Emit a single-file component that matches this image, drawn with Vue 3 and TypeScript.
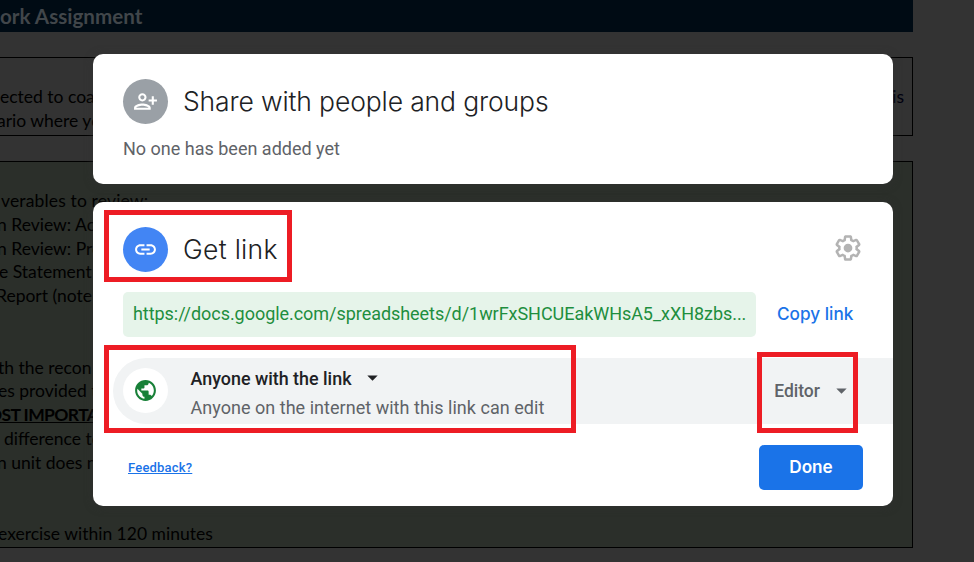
<script setup lang="ts">
interface DocLine {
  text: string
  shift: number
  strong?: boolean
}

const introLines: DocLine[] = [
  { text: 'ected to coach', shift: 0 },
  { text: 'ario where you', shift: -3 },
]

const bodyLines: DocLine[] = [
  { text: 'verables to review:', shift: 1 },
  { text: 'n Review: Accounts', shift: -3 },
  { text: 'n Review: Process', shift: -3 },
  { text: 'e Statement', shift: -1 },
  { text: 'Report (note', shift: -4 },
  { text: '', shift: 0 },
  { text: '', shift: 0 },
  { text: 'th the recon', shift: -2 },
  { text: 'es provided to', shift: -2 },
  { text: 'OST IMPORTANT', shift: -12, strong: true },
  { text: 'difference to', shift: 4 },
  { text: 'n unit does not', shift: -3 },
  { text: '', shift: 0 },
  { text: '', shift: 0 },
  { text: 'exercise within 120 minutes', shift: -2 },
]
</script>

<template>
  <div class="screen">
    <div class="sheet">
      <div class="banner">ork Assignment</div>
      <div class="box intro">
        <p v-for="(line, i) in introLines" :key="i" :style="{ marginLeft: line.shift + 'px' }">{{ line.text }}</p>
        <span class="tail">is</span>
      </div>
      <div class="box body">
        <p
          v-for="(line, i) in bodyLines"
          :key="i"
          :class="{ strong: line.strong }"
          :style="{ marginLeft: line.shift + 'px' }"
        >{{ line.text }}</p>
      </div>
    </div>

    <div class="overlay">
      <section class="card people">
        <header class="head">
          <span class="badge grey">
            <svg viewBox="0 0 24 24"><path d="M13 8c0-2.21-1.79-4-4-4S5 5.79 5 8s1.79 4 4 4 4-1.79 4-4zm-2 0c0 1.1-.9 2-2 2s-2-.9-2-2 .9-2 2-2 2 .9 2 2zM1 18v2h16v-2c0-2.66-5.33-4-8-4s-8 1.34-8 4zm2 0c.2-.71 3.3-2 6-2 2.69 0 5.78 1.28 6 2H3zM20 15v-3h3v-2h-3V7h-2v3h-3v2h3v3h2z" /></svg>
          </span>
          <h2 class="t-share">Share with people and groups</h2>
        </header>
        <p class="empty">No one has been added yet</p>
      </section>

      <section class="card link">
        <header class="head">
          <span class="badge blue">
            <svg viewBox="0 0 24 24"><path d="M3.9 12c0-1.71 1.39-3.1 3.1-3.1h4V7H7c-2.76 0-5 2.24-5 5s2.24 5 5 5h4v-1.900H7c-1.710 0-3.100-1.390-3.100-3.100zM8 13h8v-2H8v2zm9-6h-4v1.900h4c1.710 0 3.100 1.390 3.100 3.100s-1.390 3.100-3.100 3.100h-4V17h4c2.760 0 5-2.240 5-5s-2.240-5-5-5z" /></svg>
          </span>
          <h2 class="t-get">Get link</h2>
          <svg class="gear" viewBox="0 0 24 24"><path d="M13.85 22.25h-3.7c-.74 0-1.36-.54-1.45-1.27l-.27-1.89c-.27-.14-.53-.29-.79-.46l-1.8.72c-.7.26-1.47-.03-1.81-.65L2.2 15.53c-.35-.66-.2-1.44.36-1.88l1.53-1.19c-.01-.15-.02-.3-.02-.46 0-.15.01-.31.02-.46l-1.52-1.19c-.59-.45-.74-1.26-.37-1.88l1.85-3.19c.34-.62 1.11-.9 1.79-.63l1.81.73c.26-.17.52-.32.78-.46l.27-1.91c.09-.7.71-1.25 1.44-1.25h3.7c.74 0 1.36.54 1.45 1.27l.27 1.89c.27.14.53.29.79.46l1.8-.72c.71-.26 1.48.03 1.82.65l1.84 3.18c.36.66.2 1.44-.36 1.88l-1.52 1.19c.01.15.02.3.02.46s-.01.31-.02.46l1.52 1.19c.56.45.72 1.23.37 1.86l-1.86 3.22c-.34.62-1.11.9-1.8.63l-1.8-.72c-.26.17-.52.32-.78.46l-.27 1.91c-.1.68-.72 1.22-1.46 1.22zm-3.230-2h2.760l.37-2.550.53-.22c.44-.18.88-.44 1.340-.78l.45-.34 2.380.96 1.380-2.400-2.030-1.580.07-.56c.03-.26.06-.51.06-.78s-.03-.53-.06-.78l-.07-.56 2.030-1.580-1.390-2.400-2.390.96-.45-.35c-.42-.32-.87-.58-1.330-.77l-.52-.22-.37-2.550h-2.760l-.37 2.550-.53.21c-.44.19-.88.44-1.340.79l-.45.33-2.380-.95-1.390 2.390 2.030 1.580-.07.56a7 7 0 0 0-.06.79c0 .26.02.53.06.78l.07.56-2.030 1.580 1.380 2.400 2.390-.96.45.35c.43.33.86.58 1.330.77l.53.22z" /><circle cx="12" cy="12" r="3.5" /></svg>
        </header>

        <div class="url-row">
          <div class="url">https://docs.google.com/spreadsheets/d/1wrFxSHCUEakWHsA5_xXH8zbs...</div>
          <a class="copy">Copy link</a>
        </div>

        <div class="access">
          <span class="badge white">
            <svg viewBox="0 0 24 24"><path d="M12 2C6.480 2 2 6.480 2 12s4.480 10 10 10 10-4.480 10-10S17.520 2 12 2zm-1 17.930c-3.950-.49-7-3.850-7-7.930 0-.62.080-1.210.21-1.790L9 15v1c0 1.100.9 2 2 2v1.930zm6.900-2.540c-.26-.81-1-1.390-1.900-1.390h-1v-3c0-.55-.45-1-1-1H8v-2h2c.55 0 1-.45 1-1V7h2c1.100 0 2-.9 2-2v-.41c2.930 1.190 5 4.060 5 7.410 0 2.080-.8 3.970-2.100 5.390z" /></svg>
          </span>
          <div class="who">
            <div class="who-name"><span>Anyone with the link</span><svg class="caret" viewBox="0 0 24 24"><path d="M7 10l5 5 5-5z" /></svg></div>
            <div class="who-note">Anyone on the internet with this link can edit</div>
          </div>
          <div class="role"><span>Editor</span><svg class="caret" viewBox="0 0 24 24"><path d="M7 10l5 5 5-5z" /></svg></div>
        </div>

        <footer class="foot">
          <a class="feedback">Feedback?</a>
          <button class="done" type="button">Done</button>
        </footer>
      </section>
    </div>

    <div class="mark mark-title"></div>
    <div class="mark mark-access"></div>
    <div class="mark mark-role"></div>
  </div>
</template>

<style>
body { margin: 0; }
</style>

<style scoped>
* { box-sizing: border-box; }
p, h2 { margin: 0; font-weight: 400; }
svg { display: block; fill: currentColor; flex: none; }
.screen {
  position: relative;
  width: 974px;
  height: 562px;
  overflow: hidden;
  background: #333;
  font-family: Roboto, sans-serif;
}
.sheet {
  width: 913px;
  font-family: Lato, sans-serif;
  font-size: 17.5px;
  line-height: 23.8px;
  color: #000;
  white-space: nowrap;
}
.sheet p { height: 23.8px; }
.banner {
  height: 32px;
  background: #000b14;
  color: #41464a;
  font-size: 20.6px;
  font-weight: 700;
  line-height: 33px;
}
.box { border: 1px solid #000; border-left: 0; }
.intro { position: relative; margin-top: 25px; height: 79px; padding-top: 27px; }
.tail { position: absolute; right: 8px; top: 27px; color: #00000f; }
.body { margin-top: 25px; height: 387px; padding-top: 27px; background: #2b2f2a; }
.body p:first-child { letter-spacing: 0.15px; }
.strong { font-weight: 700; letter-spacing: -0.6px; text-decoration: underline; }

.overlay {
  position: absolute;
  inset: 0;
  padding: 54px 81px 56px 93px;
  display: flex;
  flex-direction: column;
  gap: 18px;
}
.card { background: #fff; border-radius: 10px; box-shadow: 0 1px 8px rgba(50, 50, 50, 0.6); }
.people { height: 130px; padding: 25px 30px 0; }
.link { height: 304px; padding-top: 25px; }
.head { display: flex; align-items: center; height: 45px; }
.link .head { padding: 0 30px; }
.badge { width: 45px; height: 45px; border-radius: 50%; display: grid; place-items: center; flex: none; }
.badge svg { width: 25px; height: 25px; }
.grey { background: #9aa0a6; color: #fff; }
.blue { background: #4285f4; color: #fff; }
.white { background: #fff; color: #188038; }
h2 {
  margin-left: 15px;
  font-family: Inter, sans-serif;
  font-size: 26.5px;
  font-weight: 350;
  line-height: 45px;
  color: #202124;
  white-space: nowrap;
}
.t-share { letter-spacing: -0.13px; }
.t-get { letter-spacing: 0.3px; }
.gear { width: 30px; height: 30px; margin: 0 0 4px auto; color: #b3b3b3; }
.empty { margin-top: 12px; font-size: 18px; line-height: 25px; color: #5f6368; }
.url-row { display: flex; align-items: center; height: 45px; margin: 20px 30px 0; }
.url {
  width: 633px;
  height: 45px;
  padding-left: 10px;
  border-radius: 5px;
  background: #e6f4ea;
  color: #1e8e3e;
  font-size: 18px;
  letter-spacing: -0.045px;
  line-height: 44px;
  white-space: nowrap;
}
.copy {
  margin: 0 0 2px 21px;
  font-family: Inter, sans-serif;
  font-size: 17.2px;
  font-weight: 500;
  color: #1a73e8;
  white-space: nowrap;
}
.access {
  display: flex;
  height: 66px;
  margin: 21px 0 0 20px;
  padding: 10px 0 0 10px;
  border-radius: 33px 0 0 33px;
  background: #f1f3f4;
}
.who { margin-left: 22.5px; white-space: nowrap; }
.who-name { display: flex; align-items: center; height: 20px; font-size: 17.9px; font-weight: 500; color: #202124; }
.caret { width: 25px; height: 25px; margin-left: 9px; }
.who-name .caret { margin-bottom: 1px; }
.who-note { margin-top: 8px; font-size: 18px; letter-spacing: 0.03px; line-height: 24px; color: #5f6368; }
.role {
  display: flex;
  align-items: center;
  height: 45px;
  margin-left: auto;
  margin-right: 39px;
  font-size: 17.5px;
  font-weight: 500;
  color: #5f6368;
}
.foot { display: flex; justify-content: space-between; align-items: center; height: 45px; margin: 21px 30px 0 35px; }
.feedback { font-size: 13px; font-weight: 500; letter-spacing: 0.2px; color: #1a73e8; text-decoration: underline; }
.done {
  width: 104px;
  height: 45px;
  padding: 0 0 3px;
  border: 0;
  border-radius: 5px;
  background: #1a73e8;
  color: #fff;
  font-family: Inter, sans-serif;
  font-size: 17.2px;
  font-weight: 600;
}

/* Highlight frames laid over the dialog */
.mark { position: absolute; border: 5px solid #ed1c24; }
.mark-title { left: 104px; top: 210px; width: 188px; height: 72px; }
.mark-access { left: 104px; top: 345px; width: 472px; height: 88px; }
.mark-role { left: 757px; top: 352px; width: 101px; height: 81px; }
</style>
